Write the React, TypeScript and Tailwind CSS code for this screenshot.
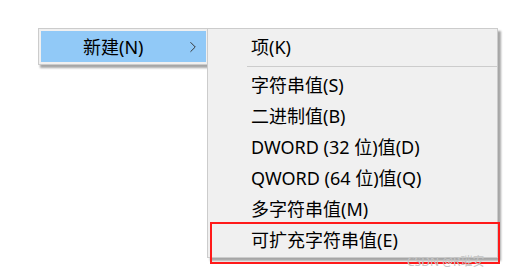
import { ChevronRight } from 'lucide-react';

const font = { fontFamily: '"Noto Sans", "Noto Sans CJK SC", sans-serif' };

const items = ['字符串值(S)', '二进制值(B)', 'DWORD (32 位)值(D)', 'QWORD (64 位)值(Q)', '多字符串值(M)', '可扩充字符串值(E)'];

function App() {
  return (
    <div className="relative w-[505px] h-[277px] bg-white overflow-hidden text-black" style={font}>
      <div className="flex items-start pt-[28px] pl-[38px]">
        {/* Parent menu */}
        <div className="w-[171px] h-[37px] bg-[#f0f0f0] border border-[#cccccc] p-[2px] shadow-[2px_3px_2px_rgba(0,0,0,0.35)]">
          <div className="h-full bg-[#91c9f7] flex items-center pl-[42px] pr-[4px]">
            <span className="text-[18px] leading-none flex-1">新建(N)</span>
            <ChevronRight className="w-[18px] h-[18px] text-[#333]" strokeWidth={1.3} />
          </div>
        </div>

        {/* Submenu */}
        <div className="relative -ml-[2px] w-[291px] h-[230px] bg-[#f0f0f0] border border-[#cccccc] pt-[2px] shadow-[3px_3px_2px_rgba(0,0,0,0.35)]">
          <div className="h-[32px] flex items-center pl-[43px] text-[18px] leading-none">项(K)</div>
          <div className="h-[6px] flex items-center pl-[39px]">
            <div className="h-px w-full bg-[#cccccc]" />
          </div>
          {items.map((t) => (
            <div key={t} className="h-[31px] flex items-center pl-[43px] text-[18px] leading-none">
              {t}
            </div>
          ))}

          {/* Annotation box */}
          <div className="absolute left-[2px] top-[193px] w-[290px] h-[42px] border-2 border-[#ff1a1a]" />
          <div className="absolute left-[199px] top-[227px] text-[12px] leading-none text-[#c4c4c4] whitespace-nowrap">
            CSDN @R璀安
          </div>
        </div>
      </div>
    </div>
  );
}

export default App;
